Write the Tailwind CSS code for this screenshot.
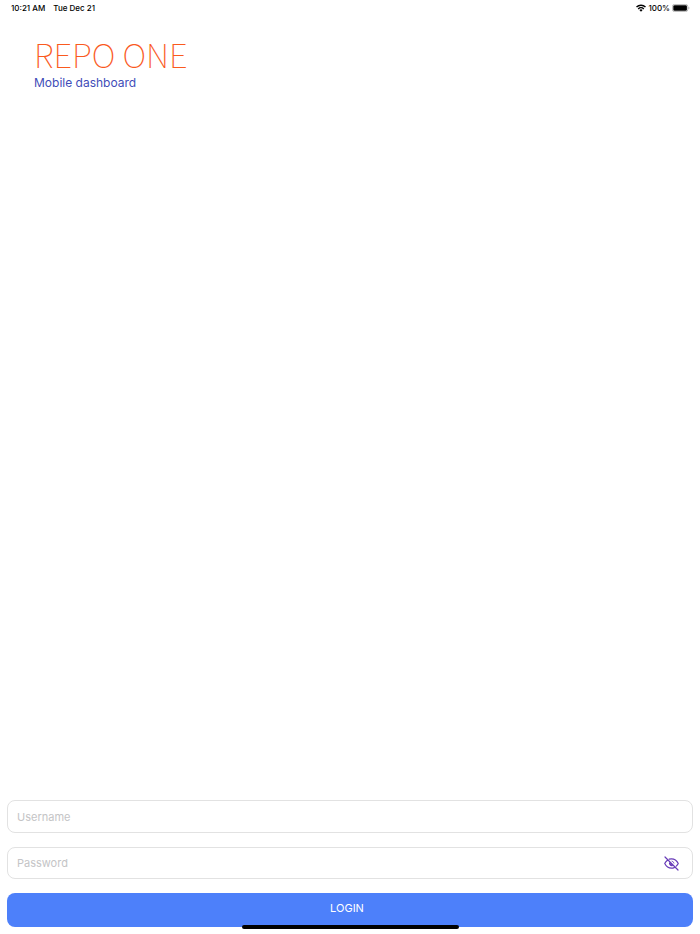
<!DOCTYPE html>
<html lang="en">
<head>
<meta charset="utf-8">
<meta name="viewport" content="width=device-width, initial-scale=1">
<title>Repo One</title>
<script src="https://cdn.jsdelivr.net/npm/@tailwindcss/browser@4"></script>
</head>
<body class="bg-white font-['Inter','Liberation_Sans',sans-serif]">
<div class="relative flex min-h-screen flex-col">
  <div class="flex h-4 items-center justify-between pl-[11px] pr-[10px] text-[8px] leading-4 font-medium text-black">
    <div class="flex gap-2"><span>10:21 AM</span><span>Tue Dec 21</span></div>
    <div class="flex items-center gap-[2px]">
      <svg class="h-[8px] w-[10px]" viewBox="0 0 20 16" fill="none" stroke="#000" stroke-width="2.8" aria-hidden="true">
        <path d="M1 6.2a13 13 0 0 1 18 0M4.4 9.8a8 8 0 0 1 11.2 0"/>
        <path d="M10 15.5 6.8 12.2a4.6 4.6 0 0 1 6.4 0z" fill="#000" stroke="none"/>
      </svg>
      <span>100%</span>
      <svg class="h-[8px] w-[18px]" viewBox="0 0 18 8" aria-hidden="true">
        <rect x=".4" y=".4" width="15.4" height="7.2" rx="2.2" fill="#fff" stroke="#a6a6a6" stroke-width=".8"/>
        <rect x="1.3" y="1.3" width="13.6" height="5.4" rx="1.3"/>
        <path d="M16.5 2.8c1.2.4 1.2 2 0 2.4z" fill="#a6a6a6"/>
      </svg>
    </div>
  </div>
  <header class="flex flex-col gap-[2px] px-[34px] pt-5">
    <h1 class="font-['Noto_Sans_CJK_SC','Liberation_Sans',sans-serif] text-[33px] leading-9 font-thin text-[#fa5a1e]">REPO ONE</h1>
    <p class="text-[12px] leading-[18px] text-[#3f4db8]">Mobile dashboard</p>
  </header>
  <form class="mt-auto flex flex-col gap-[14px] px-[7px] pb-[7px]">
    <input type="text" aria-label="Username" placeholder="Username" class="h-[33px] w-full rounded-lg border border-[#e2e2e2] px-[9px] text-[11px] outline-none placeholder:text-[#c4c4c6]">
    <div class="flex h-[32px] items-center rounded-lg border border-[#e2e2e2] pl-[9px] pr-[13px]">
      <input type="password" aria-label="Password" placeholder="Password" class="min-w-0 flex-1 text-[11px] outline-none placeholder:text-[#c4c4c6]">
      <button type="button" aria-label="Show password">
        <svg class="size-[15px]" viewBox="0 0 30 30" fill="none" stroke="#673ab7" stroke-width="2.4" stroke-linecap="round" stroke-linejoin="round" aria-hidden="true">
          <path d="M2 2 28 28M10.500 6.300a14 14 0 0 1 4.500-.7c6 0 10.700 3.800 13.500 9.400a16 16 0 0 1-4 5.200M6.300 8.900A17 17 0 0 0 1.500 15c2.800 5.600 7.500 9.400 13.500 9.400 2 0 3.800-.4 5.400-1.100"/>
          <path d="M16 10.200a5 5 0 0 1 4 4" stroke-width="1.6"/>
          <path d="M10.800 11.800a5.500 5.500 0 0 0 7.600 7.600z" fill="#673ab7" stroke="none"/>
        </svg>
      </button>
    </div>
    <button type="submit" class="h-[34px] w-full rounded-lg bg-[#4d80fa] pr-1.5 pb-1 text-[11px] text-white">LOGIN</button>
  </form>
  <div class="absolute inset-x-0 bottom-[5px] mx-auto h-[4px] w-[31%] rounded-full bg-black"></div>
</div>
</body>
</html>
